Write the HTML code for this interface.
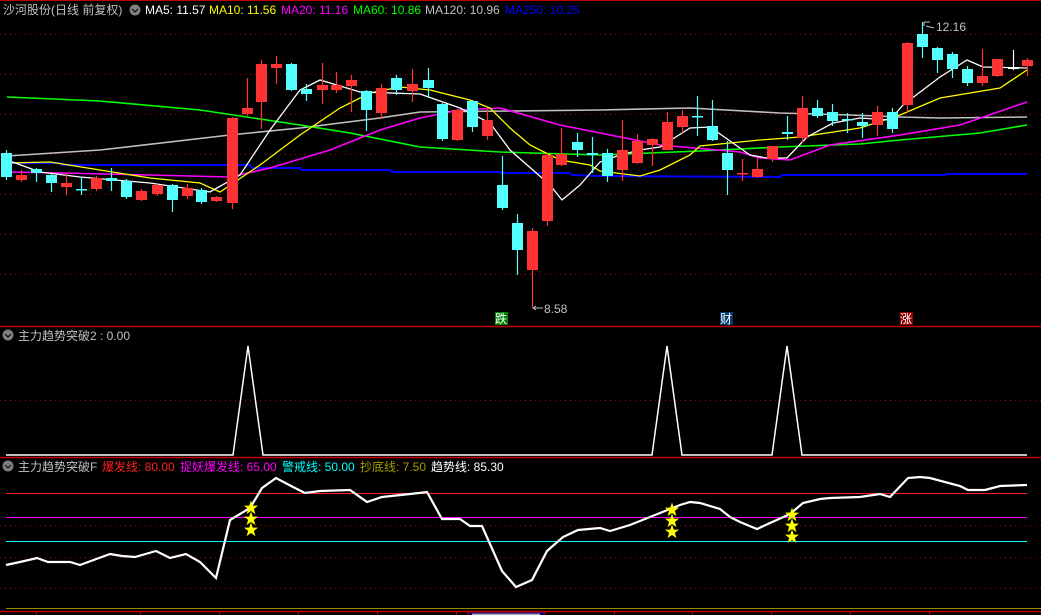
<!DOCTYPE html>
<html><head><meta charset="utf-8"><style>
html,body{margin:0;padding:0;background:#000;width:1041px;height:615px;overflow:hidden}
svg{display:block}
text{font-family:"Liberation Sans","Noto Sans CJK SC",sans-serif;font-size:12px}
.r line{stroke:#ff3333;stroke-width:1.2}.r rect{fill:#ff3333}
.c line{stroke:#54ffff;stroke-width:1.2}.c rect{fill:#54ffff}
.w line{stroke:#fff;stroke-width:1.2}.w rect{fill:#fff}
</style></head><body>
<svg width="1041" height="615" viewBox="0 0 1041 615" xmlns="http://www.w3.org/2000/svg">
<defs><path id="star" d="M0,-7.5L1.8,-2.4L7.1,-2.4L2.9,0.9L4.4,6.1L0,3L-4.4,6.1L-2.9,0.9L-7.1,-2.4L-1.8,-2.4Z" fill="#ffff00"/></defs>
<rect width="1041" height="615" fill="#000"/>
<g stroke="#a00000" stroke-width="1" stroke-dasharray="1,4">
<line x1="0" y1="34.5" x2="1041" y2="34.5"/><line x1="0" y1="74.5" x2="1041" y2="74.5"/>
<line x1="0" y1="114.5" x2="1041" y2="114.5"/><line x1="0" y1="154.5" x2="1041" y2="154.5"/>
<line x1="0" y1="194.5" x2="1041" y2="194.5"/><line x1="0" y1="234.5" x2="1041" y2="234.5"/>
<line x1="0" y1="274.5" x2="1041" y2="274.5"/>
<line x1="0" y1="400.5" x2="1041" y2="400.5"/>
<line x1="0" y1="525.5" x2="1041" y2="525.5"/><line x1="0" y1="557.5" x2="1041" y2="557.5"/>
<line x1="0" y1="588.5" x2="1041" y2="588.5"/>
</g>
<line x1="0" y1="0.5" x2="1041" y2="0.5" stroke="#c00000"/>
<line x1="0" y1="326.5" x2="1041" y2="326.5" stroke="#c00000" stroke-width="1.5"/>
<line x1="0" y1="457.5" x2="1041" y2="457.5" stroke="#c00000" stroke-width="1.5"/>

<g fill="none" stroke-width="1.3">
<polyline stroke="#0000ff" stroke-width="2" points="5,163 60,163 62,165 250,165 252,168 300,168 302,170 390,170 392,172 500,172 502,173 570,173 572,175 600,176 780,177 782,175 945,175 947,174 1027,174"/>
<polyline stroke="#c0c0c0" stroke-width="1.6" points="7,156 100,150 230,135 300,128 380,118 420,112 600,110 690,108 780,113 850,115 900,117 940,118 1027,117"/>
<polyline stroke="#00ff00" stroke-width="1.6" points="7,97 100,101 200,110 300,125 350,133 420,147 500,152 600,155 700,151 780,147 860,144 900,140 980,133 1027,125"/>
<polyline stroke="#ff00ff" stroke-width="1.6" points="7,172 60,173 150,175 230,177 270,168 330,150 380,130 420,118 460,110 500,108 560,125 600,133 660,145 740,152 760,158 790,160 830,145 900,135 960,125 1027,102"/>
<polyline stroke="#ffff00" points="7,163 50,162 100,170 150,178 200,183 220,192 260,165 300,135 340,108 370,93 400,87 430,90 470,100 490,108 510,128 530,145 560,160 590,165 600,171 640,176 660,170 690,155 700,146 760,140 800,137 860,128 900,115 940,98 1000,88 1027,70"/>
<polyline stroke="#ffffff" points="7,160 40,172 80,177 150,183 210,192 240,175 270,130 300,90 320,80 360,92 420,94 460,108 490,123 510,150 550,185 562,200 580,185 600,162 620,155 640,150 660,147 690,128 710,127 750,155 767,158 787,158 807,137 833,123 860,118 890,120 903,105 940,77 967,60 983,67 1027,68"/>
</g>

<g class="c"><line x1="6.5" y1="150" x2="6.5" y2="180"/><rect x="1" y="153" width="11" height="24"/></g>
<g class="r"><line x1="21.5" y1="170" x2="21.5" y2="182"/><rect x="16" y="175" width="11" height="5"/></g>
<g class="c"><line x1="36.5" y1="168" x2="36.5" y2="182"/><rect x="31" y="169" width="11" height="4"/></g>
<g class="c"><line x1="51.5" y1="174" x2="51.5" y2="192"/><rect x="46" y="175" width="11" height="8"/></g>
<g class="r"><line x1="66.5" y1="173" x2="66.5" y2="195"/><rect x="61" y="183" width="11" height="4"/></g>
<g class="c"><line x1="81.5" y1="177" x2="81.5" y2="195"/><rect x="76" y="189" width="11" height="1.5"/></g>
<g class="r"><line x1="96.5" y1="176" x2="96.5" y2="191"/><rect x="91" y="178" width="11" height="11"/></g>
<g class="c"><line x1="111.5" y1="168" x2="111.5" y2="191"/><rect x="106" y="178" width="11" height="3"/></g>
<g class="c"><line x1="126.5" y1="179" x2="126.5" y2="199"/><rect x="121" y="181" width="11" height="16"/></g>
<g class="r"><line x1="141.5" y1="189" x2="141.5" y2="201"/><rect x="136" y="191" width="11" height="9"/></g>
<g class="r"><line x1="157.5" y1="184" x2="157.5" y2="196"/><rect x="152" y="185" width="11" height="9"/></g>
<g class="c"><line x1="172.5" y1="184" x2="172.5" y2="212"/><rect x="167" y="185" width="11" height="15"/></g>
<g class="r"><line x1="187.5" y1="184" x2="187.5" y2="199"/><rect x="182" y="188" width="11" height="8"/></g>
<g class="c"><line x1="201.5" y1="188" x2="201.5" y2="204"/><rect x="196" y="190" width="11" height="12"/></g>
<g class="r"><line x1="216.5" y1="196" x2="216.5" y2="202"/><rect x="211" y="197" width="11" height="4"/></g>
<g class="r"><line x1="232.5" y1="117" x2="232.5" y2="209"/><rect x="227" y="118" width="11" height="85"/></g>
<g class="r"><line x1="247.5" y1="78" x2="247.5" y2="116"/><rect x="242" y="108" width="11" height="6"/></g>
<g class="r"><line x1="261.5" y1="60" x2="261.5" y2="129"/><rect x="256" y="64" width="11" height="38"/></g>
<g class="r"><line x1="276.5" y1="56" x2="276.5" y2="84"/><rect x="271" y="64" width="11" height="4"/></g>
<g class="c"><line x1="291.5" y1="63" x2="291.5" y2="91"/><rect x="286" y="64" width="11" height="26"/></g>
<g class="c"><line x1="306.5" y1="84" x2="306.5" y2="101"/><rect x="301" y="89" width="11" height="5"/></g>
<g class="r"><line x1="322.5" y1="63" x2="322.5" y2="104"/><rect x="317" y="85" width="11" height="5"/></g>
<g class="r"><line x1="336.5" y1="72" x2="336.5" y2="93"/><rect x="331" y="85" width="11" height="5"/></g>
<g class="r"><line x1="351.5" y1="75" x2="351.5" y2="112"/><rect x="346" y="80" width="11" height="6"/></g>
<g class="c"><line x1="366.5" y1="90" x2="366.5" y2="131"/><rect x="361" y="91" width="11" height="19"/></g>
<g class="r"><line x1="381.5" y1="84" x2="381.5" y2="119"/><rect x="376" y="88" width="11" height="25"/></g>
<g class="c"><line x1="396.5" y1="75" x2="396.5" y2="95"/><rect x="391" y="78" width="11" height="12"/></g>
<g class="r"><line x1="412.5" y1="69" x2="412.5" y2="102"/><rect x="407" y="84" width="11" height="7"/></g>
<g class="c"><line x1="428.5" y1="68" x2="428.5" y2="98"/><rect x="423" y="80" width="11" height="8"/></g>
<g class="c"><line x1="442.5" y1="103" x2="442.5" y2="141"/><rect x="437" y="104" width="11" height="35"/></g>
<g class="r"><line x1="457.5" y1="109" x2="457.5" y2="141"/><rect x="452" y="110" width="11" height="30"/></g>
<g class="c"><line x1="472.5" y1="100" x2="472.5" y2="132"/><rect x="467" y="101" width="11" height="26"/></g>
<g class="r"><line x1="487.5" y1="108" x2="487.5" y2="140"/><rect x="482" y="120" width="11" height="16"/></g>
<g class="c"><line x1="502.5" y1="156" x2="502.5" y2="210"/><rect x="497" y="185" width="11" height="23"/></g>
<g class="c"><line x1="517.5" y1="214" x2="517.5" y2="275"/><rect x="512" y="223" width="11" height="27"/></g>
<g class="r"><line x1="532.5" y1="228" x2="532.5" y2="308"/><rect x="527" y="231" width="11" height="39"/></g>
<g class="r"><line x1="547.5" y1="153" x2="547.5" y2="226"/><rect x="542" y="155" width="11" height="66"/></g>
<g class="r"><line x1="561.5" y1="128" x2="561.5" y2="166"/><rect x="556" y="154" width="11" height="11"/></g>
<g class="c"><line x1="577.5" y1="133" x2="577.5" y2="157"/><rect x="572" y="142" width="11" height="8"/></g>
<g class="c"><line x1="592.5" y1="137" x2="592.5" y2="173"/><rect x="587" y="153" width="11" height="2"/></g>
<g class="c"><line x1="607.5" y1="149" x2="607.5" y2="182"/><rect x="602" y="153" width="11" height="23"/></g>
<g class="r"><line x1="622.5" y1="120" x2="622.5" y2="181"/><rect x="617" y="150" width="11" height="20"/></g>
<g class="r"><line x1="637.5" y1="134" x2="637.5" y2="164"/><rect x="632" y="141" width="11" height="22"/></g>
<g class="r"><line x1="652.5" y1="138" x2="652.5" y2="166"/><rect x="647" y="139" width="11" height="6"/></g>
<g class="r"><line x1="667.5" y1="112" x2="667.5" y2="150"/><rect x="662" y="122" width="11" height="28"/></g>
<g class="r"><line x1="682.5" y1="110" x2="682.5" y2="133"/><rect x="677" y="116" width="11" height="11"/></g>
<g class="c"><line x1="697.5" y1="96" x2="697.5" y2="136"/><rect x="692" y="116" width="11" height="1.5"/></g>
<g class="c"><line x1="712.5" y1="100" x2="712.5" y2="141"/><rect x="707" y="126" width="11" height="14"/></g>
<g class="c"><line x1="727.5" y1="141" x2="727.5" y2="195"/><rect x="722" y="153" width="11" height="17"/></g>
<g class="r"><line x1="742.5" y1="159" x2="742.5" y2="181"/><rect x="737" y="173" width="11" height="1.5"/></g>
<g class="r"><line x1="757.5" y1="158" x2="757.5" y2="178"/><rect x="752" y="169" width="11" height="8"/></g>
<g class="r"><line x1="772.5" y1="146" x2="772.5" y2="162"/><rect x="767" y="146" width="11" height="13"/></g>
<g class="c"><line x1="787.5" y1="116" x2="787.5" y2="140"/><rect x="782" y="132" width="11" height="2"/></g>
<g class="r"><line x1="802.5" y1="96" x2="802.5" y2="143"/><rect x="797" y="108" width="11" height="30"/></g>
<g class="c"><line x1="817.5" y1="100" x2="817.5" y2="118"/><rect x="812" y="108" width="11" height="8"/></g>
<g class="c"><line x1="832.5" y1="104" x2="832.5" y2="126"/><rect x="827" y="112" width="11" height="9"/></g>
<g class="c"><line x1="847.5" y1="113" x2="847.5" y2="133"/><rect x="842" y="119" width="11" height="1.5"/></g>
<g class="c"><line x1="862.5" y1="113" x2="862.5" y2="138"/><rect x="857" y="122" width="11" height="4"/></g>
<g class="r"><line x1="877.5" y1="106" x2="877.5" y2="136"/><rect x="872" y="112" width="11" height="13"/></g>
<g class="c"><line x1="892.5" y1="108" x2="892.5" y2="133"/><rect x="887" y="112" width="11" height="17"/></g>
<g class="r"><line x1="907.5" y1="42" x2="907.5" y2="113"/><rect x="902" y="43" width="11" height="62"/></g>
<g class="c"><line x1="922.5" y1="22" x2="922.5" y2="58"/><rect x="917" y="34" width="11" height="13"/></g>
<g class="c"><line x1="937.5" y1="47" x2="937.5" y2="73"/><rect x="932" y="48" width="11" height="12"/></g>
<g class="c"><line x1="952.5" y1="52" x2="952.5" y2="78"/><rect x="947" y="54" width="11" height="15"/></g>
<g class="c"><line x1="967.5" y1="66" x2="967.5" y2="86"/><rect x="962" y="69" width="11" height="14"/></g>
<g class="r"><line x1="982.5" y1="49" x2="982.5" y2="86"/><rect x="977" y="76" width="11" height="7"/></g>
<g class="r"><line x1="997.5" y1="59" x2="997.5" y2="77"/><rect x="992" y="59" width="11" height="17"/></g>
<g class="w"><line x1="1013.5" y1="50" x2="1013.5" y2="70"/><rect x="1008" y="67" width="11" height="2"/></g>
<g class="r"><line x1="1027.5" y1="58" x2="1027.5" y2="76"/><rect x="1022" y="60" width="11" height="6"/></g>

<g stroke="#c0c0c0" fill="none"><path d="M924,22 h6 M924,22 v4 M926,26 l8,2"/><path d="M533,308 h10 M533,308 l3,-2 M533,308 l3,2"/></g>
<text x="936" y="31" fill="#c0c0c0">12.16</text>
<text x="544" y="313" fill="#c0c0c0">8.58</text>
<rect x="495" y="312" width="13" height="13" fill="#008000"/><text x="495" y="323" fill="#fff">跌</text>
<rect x="720" y="312" width="13" height="13" fill="#003a70"/><text x="720" y="323" fill="#fff">财</text>
<rect x="900" y="312" width="13" height="13" fill="#900000"/><text x="900" y="323" fill="#fff">涨</text>

<text x="3" y="14" fill="#c0c0c0">沙河股份(日线 前复权)</text>
<circle cx="135" cy="10" r="5.5" fill="#808080"/><path d="M132,9 l3,3 l3,-3" stroke="#000" fill="none"/>
<text x="145" y="14" fill="#ffffff">MA5: 11.57</text>
<text x="209" y="14" fill="#ffff00">MA10: 11.56</text>
<text x="281" y="14" fill="#ff00ff">MA20: 11.16</text>
<text x="353" y="14" fill="#00ff00">MA60: 10.86</text>
<text x="425" y="14" fill="#c0c0c0">MA120: 10.96</text>
<text x="505" y="14" fill="#0000ff">MA250: 10.25</text>

<circle cx="8" cy="335" r="5.5" fill="#808080"/><path d="M5,334 l3,3 l3,-3" stroke="#000" fill="none"/>
<text x="18" y="340" fill="#c0c0c0">主力趋势突破2 : 0.00</text>
<polyline fill="none" stroke="#fff" stroke-width="1.5" points="6,455 233,455 248,346 263,455 652,455 667,346 682,455 772,455 787,346 802,455 1027,455"/>

<circle cx="8" cy="466" r="5.5" fill="#808080"/><path d="M5,465 l3,3 l3,-3" stroke="#000" fill="none"/>
<text x="18" y="471" fill="#c0c0c0">主力趋势突破F</text>
<text x="102" y="471" fill="#ff2020">爆发线: 80.00</text>
<text x="180" y="471" fill="#ff00ff">捉妖爆发线: 65.00</text>
<text x="282" y="471" fill="#00ffff">警戒线: 50.00</text>
<text x="360" y="471" fill="#a0a000">抄底线: 7.50</text>
<text x="431" y="471" fill="#ffffff">趋势线: 85.30</text>
<line x1="6" y1="493.5" x2="1027" y2="493.5" stroke="#ff2020"/>
<line x1="6" y1="517.5" x2="1027" y2="517.5" stroke="#ff00ff"/>
<line x1="6" y1="541.5" x2="1027" y2="541.5" stroke="#00ffff"/>
<line x1="6" y1="608.5" x2="1041" y2="608.5" stroke="#909000"/>
<polyline fill="none" stroke="#fff" stroke-width="2.2" points="6,565 20,562 37,558 48,562 70,562 80,565 110,554 122,556 135,557 156,551 170,558 186,554 200,562 216,578 230,520 250,508 262,488 276,478 293,487 305,493 320,491 350,490 367,502 382,497 410,494 427,492 442,519 460,519 470,526 482,526 502,571 516,587 532,580 547,551 563,537 578,530 600,528 610,531 630,525 640,521 660,513 680,505 690,502 700,503 720,509 730,517 740,522 757,529 770,523 790,514 803,503 820,499 830,498 860,497 880,494 890,497 908,478 920,477 930,478 960,486 968,490 985,490 1000,486 1027,485"/>
<use href="#star" x="251" y="508"/><use href="#star" x="251" y="519"/><use href="#star" x="251" y="530"/>
<use href="#star" x="672" y="510"/><use href="#star" x="672" y="521"/><use href="#star" x="672" y="532"/>
<use href="#star" x="792" y="515"/><use href="#star" x="792" y="526"/><use href="#star" x="792" y="537"/>

<line x1="0" y1="611.5" x2="1041" y2="611.5" stroke="#c00000" stroke-width="1.5"/>
<g stroke="#c00000"><line x1="36.5" y1="611" x2="36.5" y2="615"/><line x1="140.5" y1="611" x2="140.5" y2="615"/><line x1="219.5" y1="611" x2="219.5" y2="615"/><line x1="298.5" y1="611" x2="298.5" y2="615"/><line x1="377.5" y1="611" x2="377.5" y2="615"/><line x1="456.5" y1="611" x2="456.5" y2="615"/><line x1="614.5" y1="611" x2="614.5" y2="615"/><line x1="692.5" y1="611" x2="692.5" y2="615"/><line x1="771.5" y1="611" x2="771.5" y2="615"/><line x1="850.5" y1="611" x2="850.5" y2="615"/><line x1="929.5" y1="611" x2="929.5" y2="615"/></g>
<rect x="468" y="612" width="77" height="4" fill="#000080" stroke="#c00000"/>
<rect x="472" y="613.5" width="68" height="2" fill="#a0a0c0"/>
</svg>
</body></html>
